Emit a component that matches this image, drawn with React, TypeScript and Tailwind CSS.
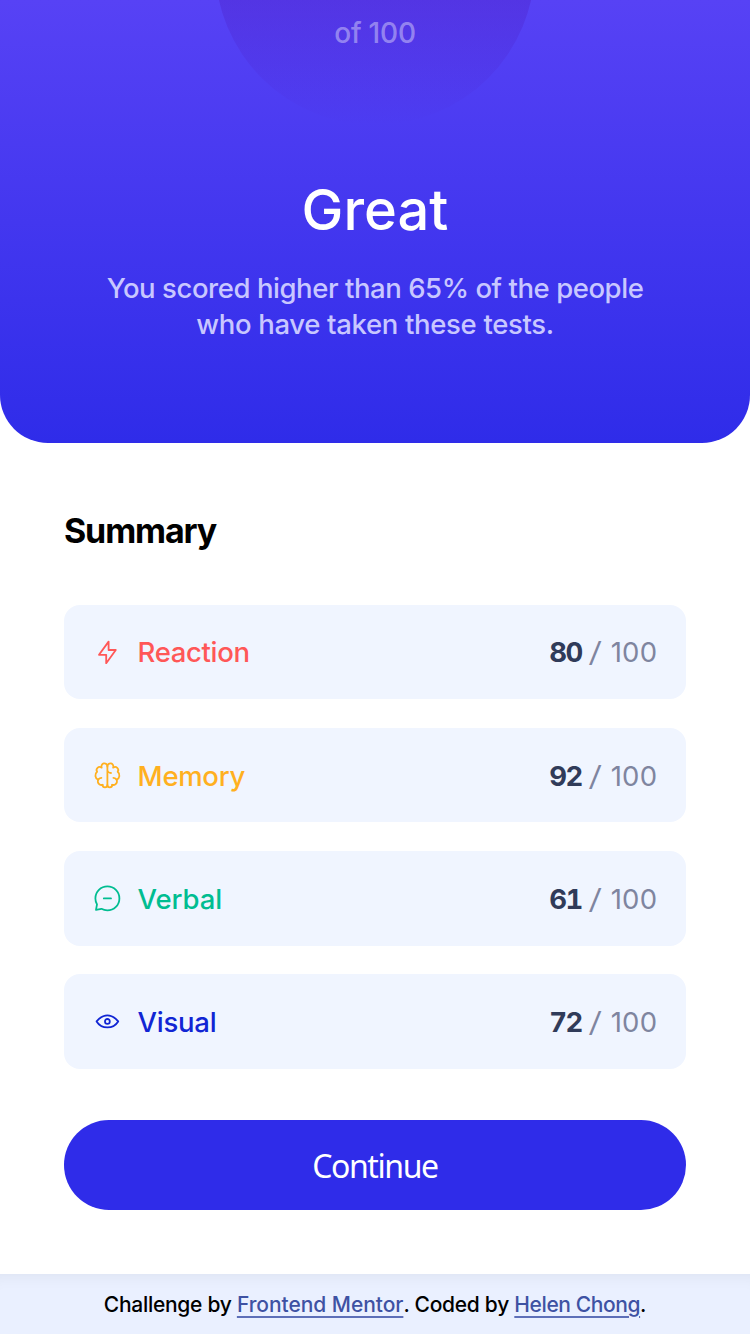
import type { ReactNode } from "react";

type Row = {
  label: string;
  score: number;
  color: string;
  tracking: string;
  icon: ReactNode;
};

const rows: Row[] = [
  {
    label: "Reaction",
    score: 80,
    color: "text-[#ff5757]",
    tracking: "tracking-[-0.35px]",
    icon: <path d="M10.833 8.333V2.5l-6.666 9.167h5V17.5l6.666-9.167h-5Z" />,
  },
  {
    label: "Memory",
    score: 92,
    color: "text-[#ffb01f]",
    tracking: "tracking-[-0.3px]",
    icon: (
      <>
        <path d="M5.833 11.667a2.5 2.5 0 1 0 .834 4.858" />
        <path d="M3.553 13.004a3.333 3.333 0 0 1-.728-5.53m.025-.067a2.083 2.083 0 0 1 2.983-2.824m.199.054A2.083 2.083 0 1 1 10 3.75v12.917a1.667 1.667 0 0 1-3.333 0M10 5.833a2.5 2.5 0 0 0 2.5 2.5m1.667 3.334a2.5 2.5 0 1 1-.834 4.858" />
        <path d="M16.447 13.004a3.334 3.334 0 0 0 .728-5.53m-.025-.067a2.083 2.083 0 0 0-2.983-2.824M10 3.75a2.085 2.085 0 0 1 2.538-2.033 2.084 2.084 0 0 1 1.43 2.92m-.635 12.03a1.667 1.667 0 0 1-3.333 0" />
      </>
    ),
  },
  {
    label: "Verbal",
    score: 61,
    color: "text-[#00bd91]",
    tracking: "tracking-[-0.1px]",
    icon: (
      <path d="M7.5 10h5M10 18.333A8.333 8.333 0 1 0 1.667 10c0 1.518.406 2.942 1.115 4.167l-.699 3.75 3.75-.699A8.295 8.295 0 0 0 10 18.333Z" />
    ),
  },
  {
    label: "Visual",
    score: 72,
    color: "text-[#1125d4]",
    tracking: "tracking-[-0.25px]",
    icon: (
      <>
        <path d="M10 11.667a1.667 1.667 0 1 0 0-3.334 1.667 1.667 0 0 0 0 3.334Z" />
        <path d="M17.5 10c-1.574 2.492-4.402 4.167-7.5 4.167S4.074 12.492 2.5 10C4.416 7.632 6.84 5.833 10 5.833s5.584 1.799 7.5 4.167Z" />
      </>
    ),
  },
];

function Result() {
  return (
    <section className="flex h-[443px] flex-col justify-end overflow-hidden rounded-b-[48px] bg-[linear-gradient(to_bottom,#5742f5,#2f2ce9)] text-center">
      <div className="mx-auto flex h-[320px] w-[320px] shrink-0 flex-col justify-end rounded-full bg-[linear-gradient(to_bottom,#4d21c9,#2421ca00)] pb-[74px]">
        <p className="text-[28px] leading-[36px] font-medium tracking-[-0.2px] text-white/40">of 100</p>
      </div>
      <h1 className="mt-[49px] shrink-0 text-[56px] leading-[72px] font-medium text-white">Great</h1>
      <p className="mt-[24px] mb-[101px] shrink-0 text-[27.5px] leading-[36px] font-medium text-[#c8c7ff]">
        <span className="tracking-[-0.44px]">You scored higher than 65% of the people</span>
        <br />
        <span className="tracking-[-0.33px]">who have taken these tests.</span>
      </p>
    </section>
  );
}

function ScoreRow({ label, score, color, tracking, icon }: Row) {
  return (
    <li className="flex h-[94.4px] items-center rounded-[16px] bg-[#f0f5ff] px-[28.8px]">
      <svg
        className={`size-[28.8px] ${color}`}
        viewBox="0 0 20 20"
        fill="none"
        stroke="currentColor"
        strokeWidth="1.25"
        strokeLinecap="round"
        strokeLinejoin="round"
      >
        {icon}
      </svg>
      <span className={`ml-[16px] pt-[1px] text-[27.5px] leading-[36px] font-medium ${tracking} ${color}`}>{label}</span>
      <span className="ml-auto flex pt-[1px] text-[27.5px] leading-[36px] text-[#7f859f]">
        <b className="font-bold tracking-[-1.6px] text-[#303b59] tabular-nums">{score}</b>
        <span className="ml-[6px] inline-block w-[23px] origin-left scale-x-150 text-left font-light">/</span>
        <span className="tracking-[0.2px]">100</span>
      </span>
    </li>
  );
}

export default function App() {
  return (
    <div className="h-[1336px] w-[752px] overflow-hidden bg-white font-['Inter',sans-serif]">
      <main className="w-[750px]">
        <Result />
        <section className="px-[64px] pt-[65px]">
          <h2 className="text-[34px] leading-[46px] font-bold tracking-[-1.15px] text-black">Summary</h2>
          <ul className="mt-[50.8px] flex flex-col gap-[28.8px]">
            {rows.map((row) => (
              <ScoreRow key={row.label} {...row} />
            ))}
          </ul>
          <button className="mt-[50.8px] block h-[90px] w-full rounded-full bg-[#2f2ce9] pt-[3px] font-['Noto_Sans',sans-serif] text-[32px] tracking-[-1.4px] text-white">
            Continue
          </button>
        </section>
      </main>
      <footer className="mt-[64px] h-[60px] w-[750px] bg-[#eaf0ff] pt-[17px] text-center text-[21px] leading-[28px] font-medium tracking-[-0.28px] text-black shadow-[inset_0_16px_16px_-14px_#00000010]">
        Challenge by{" "}
        <a className="tracking-[-0.05px] text-[#3e52a3] underline decoration-[#5d6fb8] decoration-2 underline-offset-4">Frontend Mentor</a>. Coded by{" "}
        <a className="tracking-[-0.4px] text-[#3e52a3] underline decoration-[#5d6fb8] decoration-2 underline-offset-4">Helen Chong</a>.
      </footer>
    </div>
  );
}
